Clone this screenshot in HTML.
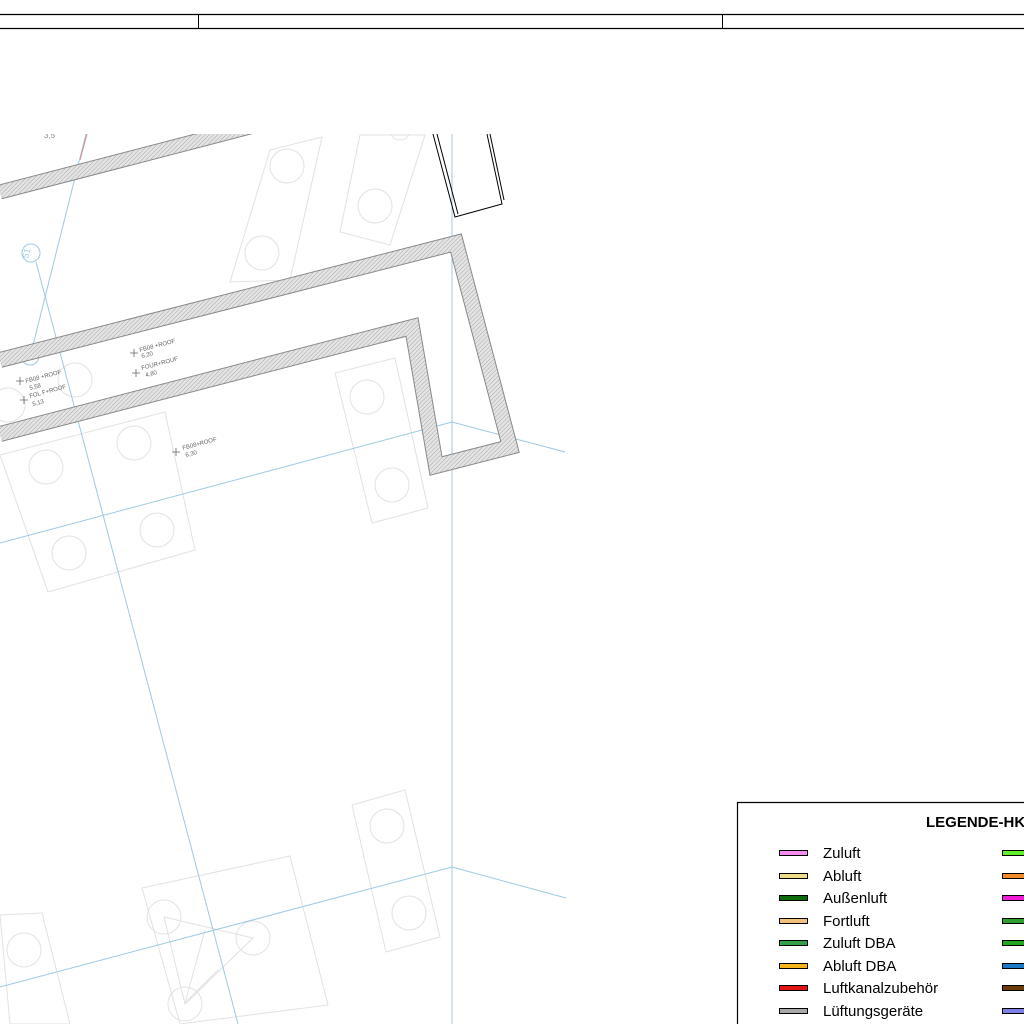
<!DOCTYPE html>
<html><head><meta charset="utf-8"><style>
html,body{margin:0;padding:0;background:#fff;width:1024px;height:1024px;overflow:hidden}
svg{display:block}
text{font-family:"Liberation Sans",Arial,sans-serif}
</style></head><body>
<svg width="1024" height="1024" viewBox="0 0 1024 1024" xmlns="http://www.w3.org/2000/svg">
<defs>
<pattern id="h" width="3" height="3" patternUnits="userSpaceOnUse" patternTransform="rotate(45)">
<rect width="3" height="3" fill="#e4e4e4"/><line x1="0" y1="0" x2="0" y2="3" stroke="#a8a8a8" stroke-width="1"/>
</pattern>
<clipPath id="c"><rect x="0" y="134" width="1024" height="890"/></clipPath>
</defs>
<line x1="0" y1="14.5" x2="1024" y2="14.5" stroke="#000" stroke-width="1.2"/>
<line x1="0" y1="28.5" x2="1024" y2="28.5" stroke="#000" stroke-width="1.2"/>
<line x1="198.5" y1="14" x2="198.5" y2="28" stroke="#000"/>
<line x1="722.5" y1="14" x2="722.5" y2="28" stroke="#000"/>
<g clip-path="url(#c)">
<g fill="none" stroke="#e2e2e2" stroke-width="1">
<polygon points="270,150 322,137 290,280 230,282"/>
<polygon points="360,135 425,135 390,245 340,232"/>
<polygon points="335,373 395,358 428,508 372,523"/>
<polygon points="0,455 165,412 195,550 48,592"/>
<polygon points="142,888 290,856 328,1005 180,1024"/>
<polygon points="352,805 405,790 440,937 386,952"/>
<polygon points="0,915 42,913 70,1024 10,1024"/>
<circle cx="287" cy="166" r="17"/><circle cx="262" cy="253" r="17"/><circle cx="375" cy="206" r="17"/>
<circle cx="367" cy="397" r="17"/><circle cx="392" cy="485" r="17"/><circle cx="46" cy="467" r="17"/>
<circle cx="69" cy="553" r="17"/><circle cx="134" cy="443" r="17"/><circle cx="157" cy="530" r="17"/>
<circle cx="8" cy="405" r="17"/><circle cx="75" cy="380" r="17"/>
<circle cx="387" cy="826" r="17"/><circle cx="409" cy="913" r="17"/><circle cx="24" cy="950" r="17"/>
<circle cx="164" cy="917" r="17"/><circle cx="253" cy="938" r="17"/><circle cx="185" cy="1004" r="17"/>
<circle cx="400" cy="130" r="10"/>
<polyline points="164,917 253,938 185,1004 164,917" />
<polyline points="205,930 185,1003"/><polyline points="185,1003 218,970"/>
</g>
<g fill="none" stroke="#9cc9e4" stroke-width="1">
<line x1="452" y1="134" x2="452" y2="1024"/>
<line x1="36" y1="262" x2="238" y2="1024"/>
<line x1="86" y1="134" x2="33" y2="345"/>
<polyline points="0,543 452,422 565,452"/>
<polyline points="0,987 452,867 566,898"/>
<circle cx="31" cy="253" r="9"/>
<circle cx="30" cy="356" r="9"/>
</g>
<text x="0" y="0" font-size="9" fill="#9cc9e4" transform="translate(28,259) rotate(-75)">51</text>
<g stroke-linejoin="miter">
<polyline points="0,192 250,127" fill="none" stroke="#8a8a8a" stroke-width="15"/>
<polyline points="0,192 250,127" fill="none" stroke="url(#h)" stroke-width="13"/>
<polyline points="0,360 456,243 510,447 436,466 412,327 0,434" fill="none" stroke="#8a8a8a" stroke-width="16"/>
<polyline points="0,360 456,243 510,447 436,466 412,327 0,434" fill="none" stroke="url(#h)" stroke-width="14"/>
</g>
<line x1="87" y1="134" x2="80" y2="160" stroke="#d88" stroke-width="1"/>
<g fill="none" stroke="#000" stroke-width="1">
<polyline points="433,134 455,217 502,204 487,134"/>
<polyline points="437,134 458,214"/>
<polyline points="490,134 504,200"/>
</g>
<g fill="#666" font-size="6">
<text transform="translate(140,352) rotate(-15)">FB08 +ROOF</text>
<text transform="translate(142,358) rotate(-15)">6,20</text>
<text transform="translate(142,370) rotate(-15)">FOUR+ROUF</text>
<text transform="translate(146,377) rotate(-15)">4,80</text>
<text transform="translate(26,383) rotate(-15)">FB08 +ROOF</text>
<text transform="translate(30,390) rotate(-15)">5,58</text>
<text transform="translate(30,398) rotate(-15)">FOL F+ROOF</text>
<text transform="translate(33,406) rotate(-15)">5,13</text>
<text transform="translate(183,450) rotate(-15)">FB08+ROOF</text>
<text transform="translate(186,457) rotate(-15)">6,30</text>
<text x="44" y="138" font-size="8" fill="#888">3,5</text>
</g>
<g stroke="#666" stroke-width="0.8">
<path d="M130,353h8M134,349v8M132,373h8M136,369v8M16,381h8M20,377v8M20,400h8M24,396v8M172,452h8M176,448v8"/>
</g>
</g>
<line x1="737.5" y1="802" x2="737.5" y2="1024" stroke="#000" stroke-width="1.2"/>
<line x1="737" y1="802.5" x2="1024" y2="802.5" stroke="#000" stroke-width="1.2"/>
<text x="926" y="827" font-size="15" font-weight="bold" fill="#000">LEGENDE-HKL</text>
<g stroke="#000" stroke-width="1">
<rect x="779.5" y="850.5" width="28" height="5" fill="#f58cf0"/>
<rect x="779.5" y="873.5" width="28" height="5" fill="#eedc8a"/>
<rect x="779.5" y="895.5" width="28" height="5" fill="#0d6b0d"/>
<rect x="779.5" y="918.5" width="28" height="5" fill="#f1c07a"/>
<rect x="779.5" y="940.5" width="28" height="5" fill="#35a04a"/>
<rect x="779.5" y="963.5" width="28" height="5" fill="#f3b519"/>
<rect x="779.5" y="985.5" width="28" height="5" fill="#e21313"/>
<rect x="779.5" y="1008.5" width="28" height="5" fill="#a9a9a9"/>
<rect x="1002.5" y="850.5" width="30" height="5" fill="#5ef02a"/>
<rect x="1002.5" y="873.5" width="30" height="5" fill="#f08a2a"/>
<rect x="1002.5" y="895.5" width="30" height="5" fill="#f21bd8"/>
<rect x="1002.5" y="918.5" width="30" height="5" fill="#2fa02f"/>
<rect x="1002.5" y="940.5" width="30" height="5" fill="#22a622"/>
<rect x="1002.5" y="963.5" width="30" height="5" fill="#1a78c4"/>
<rect x="1002.5" y="985.5" width="30" height="5" fill="#6b3b0a"/>
<rect x="1002.5" y="1008.5" width="30" height="5" fill="#7f7fe6"/>
</g>
<g font-size="15" fill="#000">
<text x="823" y="858">Zuluft</text>
<text x="823" y="881">Abluft</text>
<text x="823" y="903">Außenluft</text>
<text x="823" y="926">Fortluft</text>
<text x="823" y="948">Zuluft DBA</text>
<text x="823" y="971">Abluft DBA</text>
<text x="823" y="993">Luftkanalzubehör</text>
<text x="823" y="1016">Lüftungsgeräte</text>
</g>
</svg>
</body></html>
